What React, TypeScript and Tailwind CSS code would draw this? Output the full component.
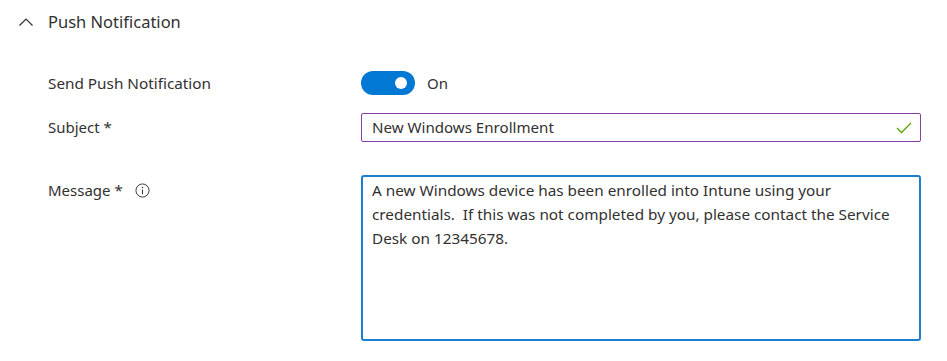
import React from "react";

export default function App() {
  const font = { fontFamily: '"Segoe UI", "Noto Sans", "Open Sans", sans-serif' };
  return (
    <div className="w-[947px] h-[361px] bg-white text-[#323130] overflow-hidden" style={font}>
      <div className="flex items-center h-[44px] pl-[19px]">
        <svg width="14" height="8" viewBox="0 0 14 8" className="shrink-0">
          <path d="M0.5 7.5 L7 1 L13.5 7.5" fill="none" stroke="#323130" strokeWidth="1.2" />
        </svg>
        <span className="ml-[15px] text-[16.5px] leading-none">Push Notification</span>
      </div>
      <div className="pl-[48px]">
        <div className="flex items-center h-[24px] mt-[27px]">
          <div className="w-[313px] text-[15.3px]">Send Push Notification</div>
          <div className="w-[54px] h-[24px] rounded-full bg-[#0078d4] flex items-center justify-end pr-[8px]">
            <div className="w-[12px] h-[12px] rounded-full bg-white" />
          </div>
          <span className="ml-[12px] text-[15px]">On</span>
        </div>
        <div className="flex items-center h-[29px] mt-[18px]">
          <div className="w-[313px] text-[15px]">Subject *</div>
          <div className="w-[560px] h-[29px] border border-[#8a3ca3] rounded-[2px] flex items-center pl-[10px] pr-[8px]">
            <span className="flex-1 text-[15.1px]">New Windows Enrollment</span>
            <svg width="16" height="12" viewBox="0 0 16 12">
              <path d="M1 6 L5.5 10.5 L15 1" fill="none" stroke="#57a300" strokeWidth="1.3" />
            </svg>
          </div>
        </div>
        <div className="flex mt-[33px]">
          <div className="w-[313px] text-[15px] pt-[1px] flex items-center h-[29px]">
            <span>Message *</span>
            <svg width="15" height="15" viewBox="0 0 16 16" className="ml-[12px]">
              <circle cx="8" cy="8" r="7" fill="none" stroke="#323130" strokeWidth="1" />
              <circle cx="8" cy="4.8" r="0.8" fill="#323130" />
              <path d="M8 7 V12" stroke="#323130" strokeWidth="1.1" />
            </svg>
          </div>
          <div className="w-[560px] h-[166px] border-2 border-[#1c7fd0] rounded-[3px] px-[9px] pt-[1px] text-[15.3px] leading-[24px] whitespace-pre">
            {"A new Windows device has been enrolled into Intune using your\ncredentials.  If this was not completed by you, please contact the Service\nDesk on 12345678."}
          </div>
        </div>
      </div>
    </div>
  );
}
